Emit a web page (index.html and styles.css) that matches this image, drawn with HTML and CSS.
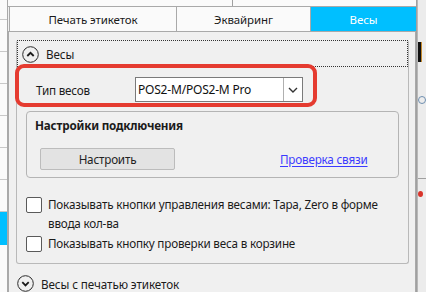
FILE: index.html
```html
<!DOCTYPE html>
<html lang="ru">
<head>
<meta charset="utf-8">
<title>Весы</title>
<link rel="stylesheet" href="styles.css">
</head>
<body>
<div class="screen">
  <div class="left-strip">
    <div class="lrow first"></div>
    <div class="lrow"></div>
    <div class="lrow"></div>
    <div class="lrow"></div>
    <div class="lrow"></div>
    <div class="lrow"></div>
    <div class="lrow"></div>
    <div class="lrow active"></div>
  </div>

  <div class="main">
    <div class="top-strip">
      <div class="top-cell"></div>
      <div class="top-cell last"></div>
    </div>
    <div class="tabs">
      <div class="tab t1">Печать этикеток</div>
      <div class="tab t2">Эквайринг</div>
      <div class="tab t3 active">Весы</div>
    </div>
    <div class="panel">
      <div class="group">
        <div class="exp-header focused">
          <svg class="circ" width="17" height="17" viewBox="0 0 17 17"><circle cx="8.5" cy="8.5" r="7.8" fill="none" stroke="#2b2b2b" stroke-width="1"/><path d="M5.3 10 L8.5 6.8 L11.7 10" fill="none" stroke="#1a1a1a" stroke-width="1.8"/></svg>
          <span>Весы</span>
        </div>
        <div class="highlight">
          <span class="lbl">Тип весов</span>
          <div class="combo">
            <span class="combo-text">POS2-M/POS2-M Pro</span>
            <span class="combo-btn"><svg width="12" height="8" viewBox="0 0 12 8"><path d="M2 2 L6 6 L10 2" fill="none" stroke="#333" stroke-width="1.4"/></svg></span>
          </div>
        </div>
        <div class="conn">
          <div class="conn-title">Настройки подключения</div>
          <div class="conn-row">
            <div class="btn">Настроить</div>
            <a class="link">Проверка связи</a>
          </div>
        </div>
        <div class="check-row two">
          <span class="box"></span>
          <span class="ctext">Показывать кнопки управления весами: Тара, Zero в форме ввода кол-ва</span>
        </div>
        <div class="check-row">
          <span class="box"></span>
          <span class="ctext">Показывать кнопку проверки веса в корзине</span>
        </div>
      </div>
      <div class="exp-header collapsed">
        <svg class="circ" width="17" height="17" viewBox="0 0 17 17"><circle cx="8.5" cy="8.5" r="7.8" fill="none" stroke="#2b2b2b" stroke-width="1"/><path d="M5.3 7.2 L8.5 10.4 L11.7 7.2" fill="none" stroke="#1a1a1a" stroke-width="1.8"/></svg>
        <span>Весы с печатью этикеток</span>
      </div>
    </div>
  </div>

  <div class="right-strip">
    <div class="rline"></div>
    <div class="rcontent">
      <div class="r-glyph"></div>
      <div class="r-circle"></div>
      <div class="r-sep"></div>
      <div class="r-dot"></div>
    </div>
  </div>
</div>
</body>
</html>
```

FILE: styles.css
```css
* { box-sizing: border-box; }
html, body { margin: 0; padding: 0; }
body {
  width: 426px;
  height: 292px;
  overflow: hidden;
  background: #f0f0f0;
  font-family: "Noto Sans", "Open Sans", sans-serif;
  font-size: 11.7px;
  letter-spacing: -0.2px;
  color: #1b1b1b;
}
.screen {
  display: flex;
  width: 426px;
  height: 292px;
}

/* left list fragment */
.left-strip {
  width: 8px;
  flex: none;
  background: #fafafa;
  border-right: 1px solid #a9a9a9;
  display: flex;
  flex-direction: column;
}
.lrow {
  height: 32px;
  flex: none;
  border-bottom: 1px solid #c8c8c8;
}
.lrow.first { height: 20px; }
.lrow.active {
  background: #00bfff;
  height: 33px;
  border-bottom: none;
}

/* main column */
.main {
  width: 408px;
  flex: none;
  display: flex;
  flex-direction: column;
}
.top-strip {
  height: 7px;
  flex: none;
  display: flex;
  background: #fafafa;
  border-bottom: 1px solid #a9a9a9;
}
.top-cell {
  width: 225px;
  border-right: 1px solid #a0a0a0;
}
.top-cell.last { flex: 1; border-right: none; }

.tabs {
  height: 24px;
  flex: none;
  display: flex;
  padding-left: 1px;
}
.tab {
  display: flex;
  align-items: center;
  justify-content: center;
  background: #fafafa;
  border-right: 1px solid #a9a9a9;
  border-left: 1px solid #a9a9a9;
  font-size: 11.5px;
  letter-spacing: -0.1px;
  color: #1b1b1b;
}
.tab.t1 { width: 168px; }
.tab.t2 { width: 134px; border-left: none; }
.tab.t3 { width: 105px; border: none; }
.tab.active { background: #00bfff; color: #ffffff; }

.panel {
  flex: 1;
  background: #f0f0f0;
  border-top: 1px solid #a9a9a9;
  border-left: 1px solid #a9a9a9;
  border-right: 1px solid #a9a9a9;
  padding: 8px 6px 0 7px;
}

.group {
  border: 1px solid #b9b9b9;
  border-top: none;
  border-radius: 3px;
  height: 224px;
  display: flex;
  flex-direction: column;
}
.exp-header {
  height: 27px;
  display: flex;
  align-items: center;
  gap: 7px;
  font-size: 11.7px;
  letter-spacing: -0.1px;
}
.exp-header.focused {
  border: 1px dotted #333;
  padding-left: 4px;
  padding-top: 1px;
}
.exp-header.collapsed {
  margin-top: 6px;
  padding-left: 1px;
}
.circ { flex: none; display: block; }

.highlight {
  margin: -3px 0 0 -2px;
  width: 302px;
  height: 43px;
  border: 4px solid #e53b30;
  border-radius: 9px;
  display: flex;
  align-items: center;
  padding: 8px 0 0 17px;
}
.lbl {
  width: 99px;
  flex: none;
  padding-top: 1px;
}
.combo {
  width: 168px;
  height: 25px;
  background: #ffffff;
  border: 1px solid #7a7a7a;
  display: flex;
  align-items: center;
}
.combo-text {
  flex: 1;
  padding-left: 2px;
  font-size: 12px;
  color: #111;
}
.combo-btn {
  width: 19px;
  height: 23px;
  border-left: 1px solid #b0b0b0;
  display: flex;
  align-items: center;
  justify-content: center;
}

.conn {
  margin: 4px 9px 0 9px;
  height: 67px;
  border: 1px solid #b4b4b4;
  border-radius: 4px;
  padding: 5px 0 0 8px;
}
.conn-title {
  font-weight: bold;
  color: #1b1b1b;
  height: 17px;
  line-height: 17px;
}
.conn-row {
  margin-top: 14px;
  display: flex;
  align-items: center;
}
.btn {
  width: 135px;
  height: 22px;
  margin-left: 5px;
  background: #e3e3e3;
  border: 1px solid #bcbcbc;
  border-radius: 2px;
  display: flex;
  align-items: center;
  justify-content: center;
  color: #222;
}
.link {
  margin-left: 105px;
  color: #3b3bff;
  text-decoration: underline;
  text-underline-offset: 2px;
}

.check-row {
  display: flex;
  align-items: flex-start;
  margin-left: 9px;
  gap: 6px;
  line-height: 19px;
}
.check-row.two { margin-top: 17px; }
.check-row + .check-row { margin-top: 1px; }
.box {
  width: 16px;
  height: 16px;
  flex: none;
  margin-top: 2px;
  background: #ffffff;
  border: 1px solid #5a5a5a;
  border-radius: 2px;
}
.ctext { width: 340px; }

/* right fragment */
.right-strip {
  width: 10px;
  flex: none;
  display: flex;
  background: #ececec;
}
.rline {
  width: 5px;
  border-left: 1px solid #a0a0a0;
  border-right: 1px solid #b8b8b8;
  background: #f0f0f0;
}
.rcontent {
  flex: 1;
  display: flex;
  flex-direction: column;
}
.r-glyph {
  margin-top: 42px;
  height: 20px;
  width: 4px;
  background: #111;
  border-right: 1px solid #c48a2e;
}
.r-circle {
  margin-top: 34px;
  width: 8px;
  height: 8px;
  border: 1px solid #6f8fb0;
  border-radius: 50%;
}
.r-sep {
  margin-top: 74px;
  height: 1px;
  background: #a0a0a0;
}
.r-dot {
  margin-top: 12px;
  width: 5px;
  height: 6px;
  background: #d9342b;
  border-radius: 50%;
}
```
